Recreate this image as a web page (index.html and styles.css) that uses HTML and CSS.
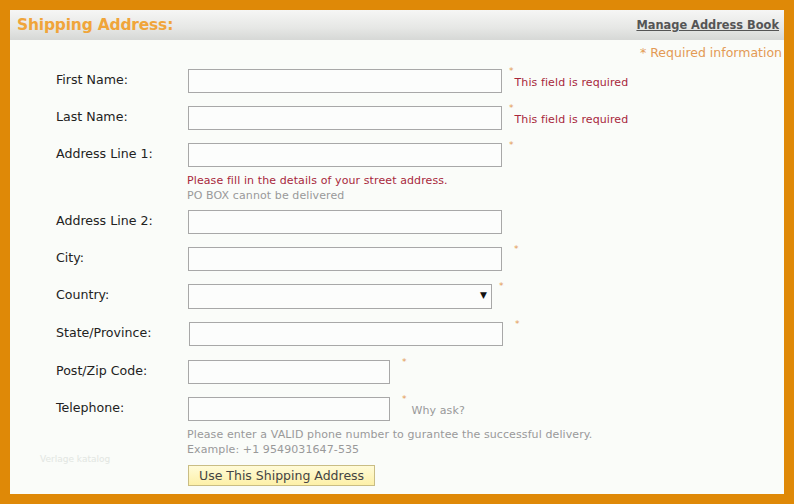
FILE: index.html
```html
<!DOCTYPE html>
<html lang="en">
<head>
    <meta charset="UTF-8">
    <title>Shipping Address</title>
    <link rel="stylesheet" href="styles.css">
</head>
<body>

    <div class="panel">
        <div class="panel-header">
            <h2>Shipping Address:</h2>
            <a href="#" class="manage-link">Manage Address Book</a>
        </div>

        <p class="required-info">* Required information</p>

        <form class="address-form" action="#" method="post">

            <div class="form-row">
                <label for="first-name">First Name:</label>
                <div class="field">
                    <input type="text" id="first-name" class="input-wide">
                    <span class="req">*</span>
                    <span class="error">This field is required</span>
                </div>
            </div>

            <div class="form-row">
                <label for="last-name">Last Name:</label>
                <div class="field">
                    <input type="text" id="last-name" class="input-wide">
                    <span class="req">*</span>
                    <span class="error">This field is required</span>
                </div>
            </div>

            <div class="form-row row-tight">
                <label for="address1">Address Line 1:</label>
                <div class="field-stack">
                    <div class="field">
                        <input type="text" id="address1" class="input-wide">
                        <span class="req">*</span>
                    </div>
                    <p class="help error-text">Please fill in the details of your street address.</p>
                    <p class="help">PO BOX cannot be delivered</p>
                </div>
            </div>

            <div class="form-row">
                <label for="address2">Address Line 2:</label>
                <div class="field">
                    <input type="text" id="address2" class="input-wide">
                </div>
            </div>

            <div class="form-row">
                <label for="city">City:</label>
                <div class="field">
                    <input type="text" id="city" class="input-wide">
                    <span class="req req-far">*</span>
                </div>
            </div>

            <div class="form-row">
                <label for="country">Country:</label>
                <div class="field">
                    <div class="select-wrap">
                        <select id="country"></select>
                    </div>
                    <span class="req">*</span>
                </div>
            </div>

            <div class="form-row">
                <label for="state">State/Province:</label>
                <div class="field">
                    <input type="text" id="state" class="input-wide input-state">
                    <span class="req req-far">*</span>
                </div>
            </div>

            <div class="form-row row-nudge">
                <label for="zip">Post/Zip Code:</label>
                <div class="field">
                    <input type="text" id="zip" class="input-short">
                    <span class="req req-far">*</span>
                </div>
            </div>

            <div class="form-row row-tight">
                <label for="phone">Telephone:</label>
                <div class="field-stack">
                    <div class="field">
                        <input type="text" id="phone" class="input-short">
                        <span class="req req-far">*</span>
                        <a href="#" class="why-ask">Why ask?</a>
                    </div>
                    <p class="help help-phone">Please enter a VALID phone number to gurantee the successful delivery.</p>
                    <p class="help">Example: +1 9549031647-535</p>
                </div>
            </div>

            <div class="form-row">
                <span class="watermark">Verlage katalog</span>
                <div class="btn-cell">
                    <button type="submit" class="btn">Use This Shipping Address</button>
                </div>
            </div>

        </form>
    </div>

</body>
</html>
```

FILE: styles.css
```css
:root {
    --frame-color: #df8907;
    --panel-bg: #fafcf9;
    --title-color: #f0a53a;
    --req-color: #e39a55;
    --error-color: #a8283c;
    --help-color: #999;
    --label-color: #222;
    --input-border: #a8a8a8;
}

* { box-sizing: border-box; margin: 0; padding: 0; }

body {
    background-color: var(--frame-color);
    padding: 10px;
    font-family: 'DejaVu Sans', Verdana, sans-serif;
    color: var(--label-color);
}

.panel {
    background-color: var(--panel-bg);
    height: 484px;
    position: relative;
}

.panel-header {
    height: 30px;
    display: flex;
    justify-content: space-between;
    align-items: center;
    padding: 0 5px 0 7px;
    background: linear-gradient(to bottom, #f6f6f5 0%, #e6e7e5 60%, #d6d8d6 100%);
}

.panel-header h2 {
    color: var(--title-color);
    font-size: 15.5px;
    font-weight: bold;
    letter-spacing: -0.2px;
}

.manage-link {
    color: #555;
    font-size: 11.4px;
    font-weight: bold;
    text-decoration: underline;
}

.required-info {
    text-align: right;
    color: var(--req-color);
    font-size: 12.5px;
    padding-right: 2px;
    margin-top: 6px;
    line-height: 14px;
}

.address-form {
    margin-top: 9px;
}

.form-row {
    display: grid;
    grid-template-columns: 132px 1fr;
    padding-left: 46px;
    margin-bottom: 13px;
}

.form-row.row-tight {
    margin-bottom: 7px;
}

.form-row.row-nudge {
    padding-top: 1px;
}

.form-row label {
    font-size: 12.6px;
    align-self: start;
    line-height: 22px;
}

.field {
    display: flex;
    align-items: center;
}

.field input {
    height: 24px;
    border: 1px solid var(--input-border);
    background: #fcfdfc;
    font-size: 12px;
    padding: 2px 4px;
}

.input-wide { width: 314px; }
.input-state { width: 314px; margin-left: 1px; }
.input-short { width: 202px; }

.req {
    align-self: flex-start;
    color: var(--req-color);
    font-size: 9px;
    line-height: 9px;
    margin-top: -2px;
    margin-left: 7px;
}

.req.req-far {
    margin-left: 12px;
}

.error {
    color: var(--error-color);
    font-size: 11px;
    letter-spacing: 0.1px;
    margin-left: 1px;
    margin-top: 2px;
}

.field-stack .help {
    font-size: 11px;
    letter-spacing: 0.1px;
    line-height: 15px;
    color: var(--help-color);
    margin-left: -1px;
}

.field-stack .help.error-text {
    color: var(--error-color);
    margin-top: 6px;
}

.field-stack .help.help-phone {
    margin-top: 6px;
}

.select-wrap {
    position: relative;
    width: 304px;
}

.select-wrap select {
    width: 100%;
    height: 25px;
    border: 1px solid var(--input-border);
    background: #fcfdfc;
    appearance: none;
    -webkit-appearance: none;
    border-radius: 0;
}

.select-wrap::after {
    content: "\25BC";
    position: absolute;
    right: 5px;
    top: 6px;
    font-size: 9px;
    color: #111;
    pointer-events: none;
}

.why-ask {
    color: var(--help-color);
    font-size: 11px;
    letter-spacing: 0.1px;
    text-decoration: none;
    margin-left: 5px;
    margin-top: 2px;
}

.watermark {
    position: absolute;
    left: 30px;
    bottom: 30px;
    font-size: 9px;
    color: #e2e6e2;
}

.btn-cell {
    grid-column: 2;
}

.btn {
    display: inline-block;
    margin-top: 1px;
    background: linear-gradient(to bottom, #fffbd8, #fdf0a8);
    border: 1px solid #c9bd84;
    color: #444;
    font-family: 'DejaVu Sans', Verdana, sans-serif;
    font-size: 12.5px;
    white-space: nowrap;
    height: 21px;
    padding: 0 10px;
    cursor: pointer;
}
```
